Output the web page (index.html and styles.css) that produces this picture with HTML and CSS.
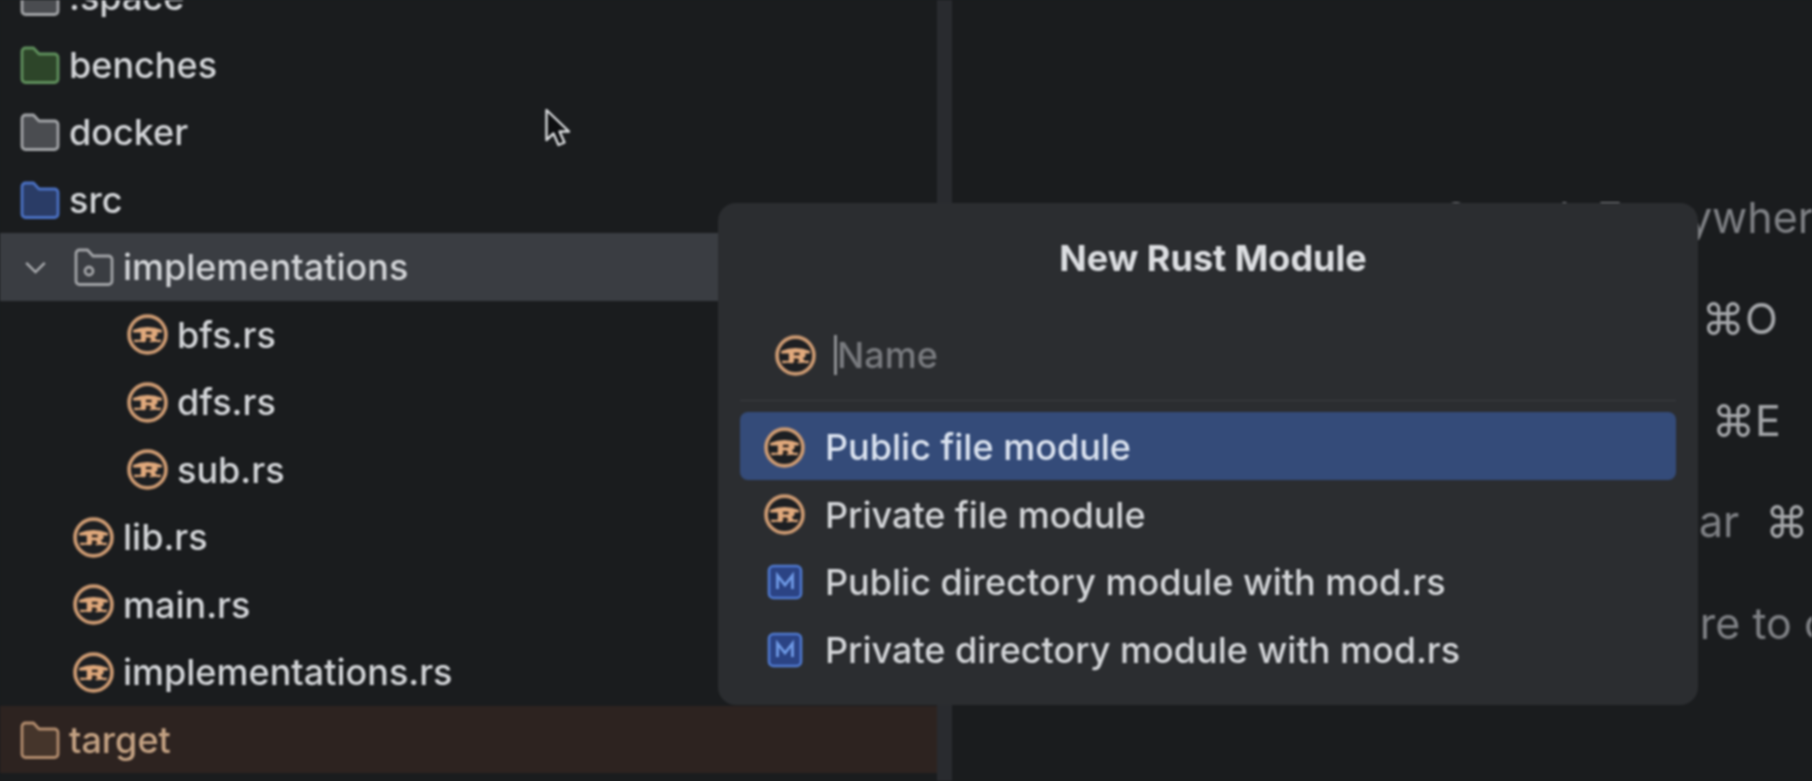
FILE: index.html
```html
<!DOCTYPE html>
<html lang="en">
<head>
<meta charset="utf-8">
<title>New Rust Module</title>
<link rel="stylesheet" href="styles.css">
</head>
<body>
<svg class="defs" width="0" height="0" aria-hidden="true">
  <symbol id="rust" viewBox="0 0 40 40">
    <circle cx="20" cy="20" r="18" fill="#1d1f22" stroke="#cc9a72" stroke-width="3.600"/>
    <path d="M6 15.500Q20 10 34 15.500V18H29.500Q31 21.500 27 22.500L29 25H33.500L32.500 27.500Q28 26.500 23 27.500L20 25L17 27.500Q12 26.500 7.500 27.500L6.500 25H13.500V18H6Z" fill="#e0a97c"/>
    <path d="M18.500 17.200H24V19.800H18.500ZM18.500 23H22.500L24 26H18.500Z" fill="#241d19"/>
  </symbol>
  <symbol id="folder" viewBox="0 0 40 40">
    <path d="M2 6.500A3.500 3.500 0 0 1 5.500 3H13.500L19 9H34.500A3.500 3.500 0 0 1 38 12.500V34A3.500 3.500 0 0 1 34.500 37.500H5.500A3.500 3.500 0 0 1 2 34Z" stroke-width="2.800" stroke-linejoin="round"/>
  </symbol>
  <symbol id="module" viewBox="0 0 36 36">
    <rect x="2" y="2" width="32" height="32" rx="4.500" fill="#2b4384" stroke="#4f79cf" stroke-width="2.600"/>
    <path d="M10.500 25V11.500L18 21L25.500 11.500V25" fill="none" stroke="#6f9ae6" stroke-width="2.800"/>
  </symbol>
</svg>

<div class="app">
  <aside class="sidebar">
    <div class="row lv0"><svg class="ico-folder grey"><use href="#folder"/></svg><span>.space</span></div>
    <div class="row lv0"><svg class="ico-folder green"><use href="#folder"/></svg><span>benches</span></div>
    <div class="row lv0"><svg class="ico-folder grey"><use href="#folder"/></svg><span>docker</span></div>
    <div class="row lv0"><svg class="ico-folder blue"><use href="#folder"/></svg><span>src</span></div>
    <div class="row open">
      <svg class="chevron" viewBox="0 0 24 14"><path d="M2 2L12 12L22 2"/></svg>
      <svg class="ico-package" viewBox="0 0 40 40"><path d="M2 6.500A3.500 3.500 0 0 1 5.500 3H13.500L19 9H34.500A3.500 3.500 0 0 1 38 12.500V34A3.500 3.500 0 0 1 34.500 37.500H5.500A3.500 3.500 0 0 1 2 34Z"/><circle cx="15" cy="24" r="4"/></svg>
      <span>implementations</span>
    </div>
    <div class="row lv2"><svg class="ico-rust"><use href="#rust"/></svg><span>bfs.rs</span></div>
    <div class="row lv2"><svg class="ico-rust"><use href="#rust"/></svg><span>dfs.rs</span></div>
    <div class="row lv2"><svg class="ico-rust"><use href="#rust"/></svg><span>sub.rs</span></div>
    <div class="row lv1"><svg class="ico-rust"><use href="#rust"/></svg><span>lib.rs</span></div>
    <div class="row lv1"><svg class="ico-rust"><use href="#rust"/></svg><span>main.rs</span></div>
    <div class="row lv1"><svg class="ico-rust"><use href="#rust"/></svg><span>implementations.rs</span></div>
    <div class="row lv0 excluded"><svg class="ico-folder tan"><use href="#folder"/></svg><span>target</span></div>
  </aside>
  <div class="splitter"></div>
  <main class="editor">
    <p class="hint">Search Everywhere <b>Double ⇧</b></p>
    <p class="hint">Go to File <b class="wide">⌘O</b></p>
    <p class="hint">Recent Files <b class="tight">⌘E</b></p>
    <p class="hint">Navigation Bar <b>⌘↑</b></p>
    <p class="hint">Drop files here to open them</p>
  </main>
</div>

<section class="popup">
  <h1 class="popup-title">New Rust Module</h1>
  <div class="name-field">
    <svg class="ico-rust"><use href="#rust"/></svg>
    <span class="caret"></span>
    <span class="placeholder">Name</span>
  </div>
  <ul class="options">
    <li class="option selected"><svg class="ico-rust"><use href="#rust"/></svg><span>Public file module</span></li>
    <li class="option"><svg class="ico-rust"><use href="#rust"/></svg><span>Private file module</span></li>
    <li class="option"><svg class="ico-module"><use href="#module"/></svg><span>Public directory module with mod.rs</span></li>
    <li class="option"><svg class="ico-module"><use href="#module"/></svg><span>Private directory module with mod.rs</span></li>
  </ul>
</section>

<svg class="cursor" viewBox="0 0 28 40"><path d="M2.500 2V32L9.500 25.500L14.500 37L20.500 34.500L15.500 23.500H25Z"/></svg>
</body>
</html>
```
FILE: styles.css
```css
* { box-sizing: border-box; }

html, body {
  margin: 0;
  height: 100%;
  overflow: hidden;
  background: #1a1c1e;
}

body {
  font-family: Inter, "Noto Sans", "DejaVu Sans", sans-serif;
  font-size: 36px;
  font-weight: 500;
  color: #d3d5d8;
  filter: blur(0.8px);
}

.defs { position: absolute; }

.app {
  display: flex;
  height: 781px;
  overflow: hidden;
}

.sidebar {
  flex: 0 0 937px;
  margin-top: -37px;
  background: #1a1c1e;
}

.row {
  display: flex;
  align-items: center;
  height: 67.5px;
  padding-top: 1px;
  white-space: nowrap;
}

.lv0 { padding-left: 20px; gap: 9px; }
.lv1 { padding-left: 73px; gap: 9px; }
.lv2 { padding-left: 127px; gap: 9px; }

.open {
  padding-left: 24px;
  background: #3a3d42;
}

.excluded {
  background: #2d2320;
  color: #c4a283;
}

.ico-folder { width: 40px; height: 40px; flex: none; }
.ico-rust { width: 41px; height: 41px; flex: none; }
.ico-module { width: 36px; height: 36px; flex: none; }

.grey { fill: #4a4c50; stroke: #a2a4a7; }
.green { fill: #2d4529; stroke: #5f8f5c; }
.blue { fill: #2a3c66; stroke: #4a70c2; }
.tan { fill: #45352b; stroke: #b28c6d; }

.chevron {
  width: 23px;
  height: 13px;
  flex: none;
  margin-right: 27px;
  fill: none;
  stroke: #a9abae;
  stroke-width: 2.600;
}

.ico-package {
  width: 40px;
  height: 40px;
  flex: none;
  margin-right: 9px;
  fill: none;
  stroke: #a2a4a7;
  stroke-width: 2.800;
}

.splitter {
  flex: 0 0 15px;
  background: #292b2f;
}

.editor {
  flex: 0 0 1400px;
  padding: 191.500px 0 0 490px;
  background: #1a1c1e;
  color: #7f8185;
  font-size: 43px;
  font-weight: 400;
}

.hint {
  margin: 0;
  height: 101.500px;
  line-height: 50px;
  white-space: nowrap;
}

.hint b {
  margin-left: 14px;
  font-weight: 400;
  color: #a4a6a9;
}

.hint .wide { margin-left: 55px; }
.hint .tight { margin-left: 10.500px; }

.popup {
  position: absolute;
  left: 718px;
  top: 203px;
  width: 980px;
  height: 502px;
  padding: 0 22px;
  background: #2b2d30;
  border-radius: 18px;
}

.popup-title {
  margin: 0;
  padding: 35px 0 0 10px;
  height: 98px;
  font-size: 36px;
  line-height: 40px;
  font-weight: 700;
  text-align: center;
  color: #dcdee1;
}

.name-field {
  display: flex;
  align-items: center;
  height: 100px;
  padding: 9px 0 0 35px;
  border-bottom: 1px solid #3a3c40;
}

.caret {
  width: 3px;
  height: 40px;
  margin-left: 18px;
  background: #8d8f92;
}

.placeholder {
  color: #797b7f;
}

.options {
  list-style: none;
  margin: 11px 0 0;
  padding: 0;
}

.option {
  display: flex;
  align-items: center;
  height: 67.500px;
  padding: 3px 0 0 24px;
  border-radius: 8px;
}

.option .ico-rust { margin-right: 20px; }
.option .ico-module { margin: 0 22px 0 3px; }

.selected {
  background: #344b79;
  color: #dbe3f0;
}

.cursor {
  position: absolute;
  left: 544px;
  top: 108px;
  width: 28px;
  height: 40px;
  fill: #0d0e10;
  stroke: #d8dadc;
  stroke-width: 2.400;
  stroke-linejoin: round;
}
```
